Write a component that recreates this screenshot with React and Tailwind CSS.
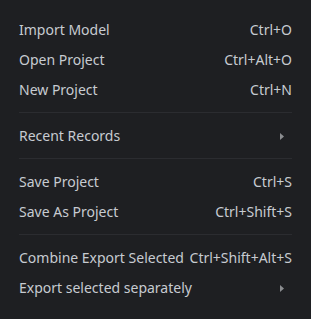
import React from 'react';

const groups = [
  [
    { label: 'Import Model', shortcut: 'Ctrl+O' },
    { label: 'Open Project', shortcut: 'Ctrl+Alt+O' },
    { label: 'New Project', shortcut: 'Ctrl+N' },
  ],
  [{ label: 'Recent Records', submenu: true }],
  [
    { label: 'Save Project', shortcut: 'Ctrl+S' },
    { label: 'Save As Project', shortcut: 'Ctrl+Shift+S' },
  ],
  [
    { label: 'Combine Export Selected', shortcut: 'Ctrl+Shift+Alt+S' },
    { label: 'Export selected separately', submenu: true },
  ],
];

const Caret = () => (
  <svg width="4" height="7" viewBox="0 0 4 7" className="mr-[8px]">
    <path d="M0 0 L4 3.5 L0 7 Z" fill="#8b8d90" />
  </svg>
);

const Row = ({ item }) => (
  <div className="flex h-[30px] items-center justify-between">
    <span>{item.label}</span>
    {item.submenu ? <Caret /> : <span>{item.shortcut}</span>}
  </div>
);

export default function App() {
  return (
    <div
      className="h-[319px] w-[311px] bg-[#1e1f22] px-[19px] pt-[15px] text-[14px] leading-[20px] text-[#c7cbd1]"
      style={{ fontFamily: '"Noto Sans", sans-serif' }}
    >
      {groups.map((group, i) => (
        <div key={i}>
          {i > 0 && <div className="mt-[7px] mb-[8px] h-px w-full bg-[#2b2c30]" />}
          {group.map((item) => (
            <Row key={item.label} item={item} />
          ))}
        </div>
      ))}
    </div>
  );
}
